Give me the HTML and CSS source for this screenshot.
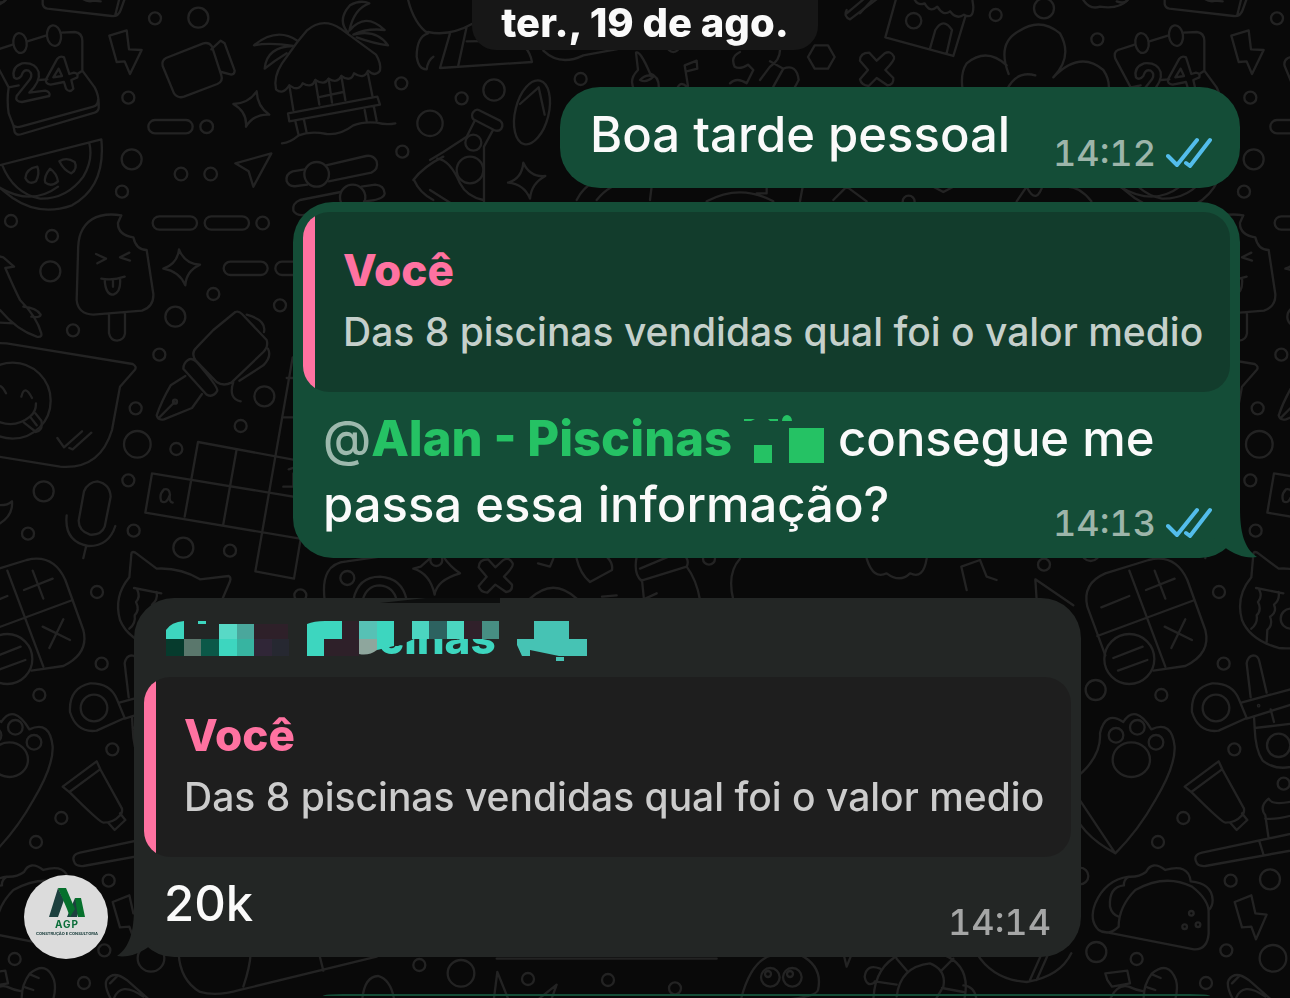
FILE: index.html
```html
<!DOCTYPE html>
<html lang="pt-BR">
<head>
    <meta charset="UTF-8">
    <title>Conversa</title>
    <link rel="stylesheet" href="styles.css">
</head>
<body>
    <svg class="wallpaper" aria-hidden="true">
        <defs>
            <g id="tile">
                <!-- dots -->
                <g id="dots">
                    <circle cx="465" cy="55" r="18"/><circle cx="595" cy="53" r="30"/><circle cx="385" cy="293" r="18"/>
                    <circle cx="620" cy="380" r="19"/><circle cx="395" cy="478" r="30"/><circle cx="543" cy="522" r="19"/>
                    <circle cx="632" cy="522" r="19"/><circle cx="366" cy="575" r="18"/><circle cx="33" cy="663" r="18"/>
                    <circle cx="156" cy="708" r="18"/><circle cx="151" cy="814" r="30"/><circle cx="788" cy="669" r="19"/>
                    <circle cx="640" cy="882" r="18"/><circle cx="840" cy="916" r="18"/><circle cx="526" cy="950" r="30"/>
                    <circle cx="1204" cy="250" r="18"/><circle cx="1207" cy="455" r="18"/><circle cx="219" cy="991" r="18"/>
                    <circle cx="478" cy="1064" r="18"/><circle cx="793" cy="1189" r="30"/><circle cx="407" cy="1225" r="18"/>
                    <circle cx="722" cy="1278" r="18"/><circle cx="412" cy="1333" r="40"/><circle cx="529" cy="1347" r="18"/>
                    <circle cx="385" cy="1441" r="18"/><circle cx="131" cy="1474" r="30"/><circle cx="84" cy="1601" r="18"/>
                    <circle cx="401" cy="1592" r="18"/><circle cx="550" cy="1643" r="30"/><circle cx="690" cy="1652" r="18"/>
                    <circle cx="291" cy="1776" r="18"/><circle cx="901" cy="1786" r="18"/><circle cx="1742" cy="237" r="18"/>
                    <circle cx="1482" cy="270" r="32"/><circle cx="1385" cy="295" r="18"/><circle cx="1290" cy="370" r="38"/>
                    <circle cx="1420" cy="428" r="24"/><circle cx="1410" cy="510" r="40"/><circle cx="2987" cy="45" r="18"/>
                    <circle cx="3132" cy="25" r="30"/><circle cx="3292" cy="118" r="18"/><circle cx="2020" cy="138" r="18"/>
                    <circle cx="305" cy="1991" r="18"/><circle cx="118" cy="2085" r="18"/><circle cx="337" cy="2248" r="18"/>
                    <circle cx="184" cy="2454" r="18"/><circle cx="108" cy="2526" r="18"/><circle cx="326" cy="2642" r="18"/>
                    <circle cx="313" cy="2851" r="18"/><circle cx="44" cy="2877" r="18"/><circle cx="252" cy="2949" r="18"/>
                    <circle cx="453" cy="2875" r="40"/><circle cx="3132" cy="1694" r="18"/><circle cx="3287" cy="2070" r="30"/>
                    <circle cx="3240" cy="2628" r="25"/><circle cx="444" cy="2638" r="30"/><circle cx="3289" cy="2856" r="30"/>
                    <circle cx="485" cy="2351" r="18"/><circle cx="1258" cy="2895" r="18"/><circle cx="1383" cy="2920" r="40"/>
                    <circle cx="1584" cy="2937" r="18"/><circle cx="1824" cy="2940" r="18"/><circle cx="2025" cy="2965" r="18"/>
                    <circle cx="2726" cy="605" r="18"/><circle cx="1309" cy="1680" r="18"/><circle cx="3272" cy="1655" r="28"/>
                </g>
                <!-- dashes -->
                <rect x="445" y="360" width="133" height="40" rx="20"/>
                <rect x="458" y="649" width="133" height="40" rx="20"/>
                <rect x="614" y="649" width="133" height="40" rx="20"/>
                <rect x="671" y="785" width="132" height="40" rx="20"/>
                <rect x="826" y="785" width="132" height="40" rx="20"/>
                <!-- notebook -->
                <path d="M128 -20V12Q130 24 142 26L335 48Q355 50 362 30L380 -20M346 44L362 -20M245 -6Q262 8 280 2L302 4"/>
                <path d="M-16 4Q10 14 20 -4"/>
                <!-- calendar -->
                <path d="M-12 150L38 134M82 124L140 106M184 98L225 96Q246 98 247 122V212M247 212L284 262Q298 288 296 320Q298 332 284 338L66 402Q50 408 44 396L40 376L26 340Q20 300 26 262L-20 176Q-26 156 -12 150M26 262L56 256M116 240L142 238M232 222L247 212M40 376Q48 384 62 380L280 320Q294 316 294 300"/>
                <ellipse cx="60" cy="129" rx="20" ry="30" transform="rotate(-8 60 129)"/>
                <ellipse cx="162" cy="107" rx="21" ry="31" transform="rotate(-8 162 107)"/>
                <path d="M42 232Q34 202 66 190Q106 186 116 216Q122 244 88 278L136 272Q152 276 148 288L66 306Q44 304 50 288L90 238Q100 222 86 212Q70 206 64 228Q52 242 42 232ZM172 176Q180 166 192 172L208 222L222 218Q236 220 232 232L214 240L220 266Q208 280 198 266L192 246L152 254Q134 250 138 238ZM176 206L160 232L186 228Z"/>
                <!-- bolt -->
                <path d="M328 107L380 91L387 148L425 150L390 222L374 184L350 186Z"/>
                <!-- camera -->
                <path d="M498 174L610 130Q628 126 636 140L664 226Q670 244 652 252L552 290Q534 296 522 280L488 198Q484 182 498 174ZM634 148L662 122L674 130L704 212Q704 222 694 224L664 216"/>
                <!-- stars -->
                <path d="M770 274Q772 320 808 344Q760 342 738 380Q742 336 700 312Q746 310 770 274Z"/>
                <path d="M537 748Q554 792 600 794Q558 814 556 856Q538 814 490 806Q532 792 537 748Z"/>
                <path d="M1570 488Q1590 532 1636 528Q1594 550 1590 596Q1572 552 1524 548Q1566 536 1570 488Z"/>
                <!-- arrow -->
                <path d="M706 490L814 460L760 560L746 514Z"/>
                <!-- beach hut -->
                <path d="M892 126L920 92Q968 50 1022 86L1128 164Q1144 190 1140 212Q1126 232 1104 212Q1092 240 1062 220Q1052 248 1024 228Q1012 252 986 236Q974 258 946 240Q936 266 908 250Q896 276 868 256Q848 286 828 268Q820 230 846 190Z"/>
                <path d="M892 122Q830 80 762 136Q810 126 880 138Q800 140 794 206Q824 182 860 160M1044 98Q1010 60 1050 16Q1080 -2 1108 10Q1062 26 1048 92Q1096 34 1154 90Q1100 84 1060 104Q1130 86 1164 136Q1120 130 1070 112"/>
                <path d="M868 256L880 330M946 240L958 314M986 236L996 308M1024 228L1036 300M1104 222L1118 292M954 292L1030 276M864 340L1132 290L1140 314L868 364ZM886 364L896 406M912 360L920 398M1094 330L1100 362M1122 322L1130 362M846 430Q870 428 896 406Q930 392 980 402Q1020 406 1060 376Q1090 364 1130 368Q1160 376 1186 370"/>
                <!-- melon -->
                <path d="M-58 510L304 418Q318 560 216 616Q120 650 38 594Q-20 550 -58 510M6 494Q40 580 120 596Q200 598 250 530Q280 480 268 430"/>
                <path d="M112 500Q78 506 76 534Q86 556 108 544Q120 520 112 500ZM150 506Q130 530 136 548Q154 562 174 544Q170 520 150 506ZM178 484Q200 470 224 486Q234 506 214 520Q192 512 178 484Z"/>
                <!-- sliders -->
                <path d="M914 508L878 514Q856 522 860 544Q868 562 890 558L922 554M986 544L1114 518Q1136 508 1130 484Q1120 464 1098 468L978 496M1022 576L900 600Q876 610 880 632Q890 650 920 644M1084 560L1126 554Q1152 556 1154 580Q1152 600 1092 604"/>
                <circle cx="950" cy="523" r="37"/><circle cx="1058" cy="592" r="38"/>
                <!-- popsicle -->
                <path d="M364 646Q270 632 242 700Q234 720 234 760L230 900Q234 942 280 944L426 932Q462 920 460 882L440 750Q408 750 400 712Q352 704 354 668ZM327 944V1000Q332 1022 351 1022Q372 1020 375 1000V940M288 762L318 776L292 790M388 758L360 772L390 782M304 836Q340 842 374 830M314 838Q316 884 340 884Q364 876 360 834M339 842V860"/>
                <!-- banana -->
                <path d="M-40 760L10 772L42 800L16 804Q40 860 60 900Q110 950 124 1000M70 920Q110 924 122 944Q120 954 94 950M0 930Q50 990 110 1010Q130 1014 122 994M0 968L40 970"/>
                <!-- pen -->
                <path d="M640 990L706 936Q716 932 726 942L800 1020Q806 1040 790 1056L694 1148Q670 1160 650 1146L586 1080Q572 1058 590 1042ZM740 944Q800 960 792 996M804 1046Q816 1070 790 1096L718 1142M564 1080Q550 1090 550 1106L620 1184Q640 1194 652 1172Q654 1160 590 1086Q576 1072 564 1080ZM556 1128L512 1156Q484 1204 470 1246Q474 1262 492 1258L576 1224L606 1182M478 1252L524 1206M700 1146Q684 1196 722 1204"/>
                <circle cx="525" cy="1205" r="6"/>
                <!-- speech bubble -->
                <path d="M-40 1028L20 1030L398 1092Q412 1100 404 1110L360 1160L336 1290Q300 1410 180 1400L-40 1364"/>
                <circle cx="38" cy="1202" r="114"/>
                <path d="M-16 1180Q-4 1136 18 1180M64 1190Q74 1150 96 1194M-20 1258Q40 1290 90 1250Q108 1236 108 1210M72 1268L108 1296Q130 1290 124 1262L106 1240M90 1250L110 1276M172 1314L192 1342L246 1294M208 1344L218 1348L274 1298"/>
                <!-- crossword -->
                <path d="M878 1072L766 1714L882 1736L940 1390L594 1326L554 1550M456 1420L940 1500M456 1420L436 1538L900 1616M710 1348L670 1572M860 1134H900M848 1252H900"/>
                <path d="M510 1484Q508 1464 492 1468Q476 1484 484 1504Q500 1514 510 1484Q506 1506 518 1508M866 1408L884 1402M850 1460H880V1420"/>
                <!-- microphone -->
                <path d="M292 1444Q330 1452 332 1490L314 1580Q304 1606 270 1604Q236 1592 236 1562L252 1474Q264 1446 292 1444ZM200 1546Q192 1624 264 1638Q326 1640 346 1578M258 1640L250 1674"/>
                <path d="M-20 1514Q20 1520 36 1504Q40 1550 -10 1576"/>
                <!-- cat -->
                <path d="M600 1738L686 1728Q694 1732 690 1744L666 1800M600 1738Q540 1702 470 1706L406 1658Q394 1652 394 1664L388 1732Q340 1790 360 1860Q384 1920 470 1944Q540 1950 600 1920M402 1764L484 1780M412 1770Q422 1790 408 1806Q420 1830 404 1846Q408 1870 388 1886M470 1776Q474 1800 456 1814Q466 1836 444 1850Q454 1874 436 1890L434 1926"/>
                <circle cx="506" cy="1856" r="30"/>
                <!-- calculator -->
                <path d="M-50 1720L80 1680Q160 1660 196 1740L250 1890Q268 1960 190 1998L94 2012M-50 1720Q-120 1750 -104 1820L-50 1966M22 1712L130 2000M-74 1908L218 1800M72 1770L158 1736M98 1712L130 1796M-62 1822L22 1788M128 1880L210 1920M190 1858L148 1944"/>
                <circle cx="22" cy="1977" r="75"/>
                <path d="M-26 1974L62 1940M-12 2012L76 1980"/>
                <!-- tape and tools -->
                <path d="M374 2154L290 2192Q230 2200 210 2136Q206 2064 270 2050Q330 2048 350 2096ZM358 2108L520 2064M374 2156L520 2110M386 2092L374 1990Q378 1968 394 1966Q408 1966 412 1984L434 2078M396 2150L398 2184L520 2170M446 2128L456 2166M398 2184Q400 2250 422 2282Q470 2320 540 2290"/>
                <circle cx="282" cy="2124" r="40"/><circle cx="470" cy="2236" r="35"/><circle cx="410" cy="2117" r="2"/>
                <!-- paw -->
                <path d="M-20 2560Q-130 2500 -150 2420M-160 2350Q-60 2280 -66 2200Q-50 2130 4 2166Q40 2110 88 2188Q150 2160 158 2240Q160 2300 100 2400Q50 2490 -20 2560Z"/>
                <circle cx="-18" cy="2206" r="22"/><circle cx="46" cy="2182" r="22"/><circle cx="102" cy="2227" r="22"/><ellipse cx="28" cy="2279" rx="56" ry="52"/>
                <!-- paint tube -->
                <path d="M188 2360L290 2284L302 2310L366 2426Q368 2440 358 2448Q340 2468 310 2468Q300 2468 210 2378ZM208 2376L300 2308M326 2470L344 2490L376 2460L360 2440"/>
                <!-- toothbrush -->
                <path d="M560 2490L240 2558Q214 2564 222 2584Q226 2600 250 2598L560 2542M412 2524L424 2562M440 2516L430 2446Q410 2420 440 2396Q450 2420 530 2400M430 2456Q470 2460 530 2440"/>
                <!-- taco -->
                <path d="M-60 2794L216 2848Q256 2850 260 2800V2740Q262 2700 210 2660Q130 2620 40 2670Q-10 2720 -10 2780Q-40 2810 -70 2790Q-100 2760 -80 2710Q-50 2640 20 2630Q50 2632 72 2616Q90 2580 130 2610Q200 2590 206 2644Q270 2650 272 2700Q272 2720 260 2730M6 2656Q-40 2660 -36 2720Q-30 2744 -10 2750M6 2656Q4 2640 20 2630"/>
                <circle cx="188" cy="2780" r="7"/><circle cx="208" cy="2740" r="7"/><circle cx="228" cy="2774" r="7"/>
                <path d="M338 2706L388 2686L400 2740L434 2744L402 2818L388 2780L360 2782Z"/>
                <!-- peanut, bread, shell -->
                <path d="M-44 2940L-50 2920L16 2912L24 2950L-30 2960ZM-40 3010Q-20 2950 20 2960Q40 2970 66 2974M66 3010Q60 2960 90 2920Q140 2880 162 2940Q170 2970 156 3010M92 2924L116 2934M76 2962L100 2970M340 3010Q310 2960 320 2940Q340 2910 380 2940L460 3010M340 3000Q360 2940 430 2990M350 2930L330 2950"/>
                <path d="M536 2860Q540 2940 600 2976Q650 2990 720 2970L1130 2870M730 2960Q750 2900 752 2860M960 2872L970 2912M1086 3010Q1090 2930 1134 2928Q1176 2940 1184 3010M1480 3010L1492 2916L1530 3010M1600 3010L1670 2954L1650 3010M1490 2876H2150"/>
                <!-- ghost -->
                <path d="M2220 3010Q2250 2880 2320 2864H2400Q2470 2900 2454 2970Q2450 2990 2350 3000"/>
                <circle cx="2311" cy="2932" r="28"/><circle cx="2377" cy="2932" r="28"/><circle cx="2304" cy="2922" r="9"/><circle cx="2370" cy="2922" r="9"/>
                <!-- turtle -->
                <path d="M2620 3010Q2620 2900 2700 2864H2830Q2920 2900 2890 3010M2690 2990Q2700 2900 2790 2890Q2840 2910 2830 2960L2800 3010M2624 2944L2690 2954M2690 2876L2724 2916M2860 2876L2822 2914M2826 2964L2890 2976M2640 2906Q2600 2890 2594 2930Q2600 2964 2626 2946M2890 2956Q2930 2960 2930 3010M2530 2860L2540 2900L2556 2860M2930 2860Q2980 2940 3080 2946Q3180 2930 3214 2860M3090 2940L3130 2850M3110 2940L3150 2850"/>
                <!-- boat, hat and lamp behind the date -->
                <path d="M1222 -10Q1240 70 1284 100Q1250 110 1250 170Q1256 210 1280 208Q1284 180 1300 170M1284 96Q1350 110 1420 70M1350 100L1320 204L1596 186Q1586 130 1530 122L1400 124M1400 80L1374 200M1630 152Q1680 200 1750 166L1860 146M1240 540Q1270 500 1330 470M1242 540Q1260 580 1300 600"/>
                <path d="M1436 330L1500 362Q1512 372 1504 386Q1496 396 1482 390L1420 358Q1412 346 1420 336Q1428 326 1436 330ZM1424 362L1400 410L1330 456L1290 480M1478 392L1452 440V610M1290 570L1400 640M1312 476Q1350 480 1380 550Q1400 590 1450 600"/>
                <ellipse cx="1596" cy="337" rx="50" ry="98" transform="rotate(14 1596 337)"/>
                <path d="M1560 312L1616 262L1634 344"/>
                <path d="M1908 158Q1920 150 1950 220M1908 158L1914 210Q1884 240 1904 270M1950 220Q1980 230 1976 270M1920 240Q1940 220 1960 230Q1940 250 1920 240M2064 258L2054 196L2090 182L2092 206L2060 214M2060 260Q2040 240 2030 270M2220 156Q2190 170 2204 200Q2220 210 2244 194L2260 210L2240 250Q2210 230 2190 250M2340 150Q2340 180 2310 200L2280 240M2310 184L2350 206L2320 260M2350 206Q2390 190 2396 240L2380 270"/>
                <path d="M2424 171L2444 136H2484L2504 171L2484 206H2444ZM2540 40L2600 -10M2540 30Q2530 50 2550 58L2640 -10M2110 0Q2130 10 2150 -4"/>
                <!-- shop -->
                <path d="M2690 -10L2656 112L2860 168L2896 50M2740 -10Q2750 20 2774 10Q2790 40 2812 20Q2830 50 2850 34Q2870 60 2892 44Q2920 60 2920 20L2916 -10M2790 146L2806 90Q2830 50 2856 90L2840 160M2580 40L2620 -4"/>
                <circle cx="2741" cy="62" r="23"/>
                <!-- cross marks -->
                <path id="cross" d="M2608 158L2630 182L2654 160Q2672 150 2682 170Q2686 180 2656 210L2680 234Q2682 254 2662 256L2630 234L2606 258Q2584 256 2580 238L2604 210L2580 182Q2580 158 2608 158Z"/>
                <use href="#cross" transform="translate(-1144 1520)"/>
                <!-- cloud -->
                <path d="M3026 222Q2990 130 3056 94Q3120 50 3180 100Q3220 170 3160 232Q3240 150 3310 210Q3330 240 3326 270M3020 196Q2960 140 2900 190Q2880 220 2888 270M3020 270Q3050 210 3106 226M3250 0Q3270 30 3300 20Q3360 30 3388 -6"/>
                <!-- between messages -->
                <path d="M1730 600Q1750 560 1780 550M1790 600Q1830 550 1880 550M1950 600L1956 550M2120 604Q2220 550 2320 604M2270 580H2300V550M2400 604L2410 550M2500 600L2540 560L2600 604M2800 560L2830 576L2860 560M3050 604L3080 560Q3110 620 3130 550M3200 560Q3240 560 3274 604M3360 560Q3460 620 3540 560"/>
                <path d="M974 1800Q960 1690 1040 1684L1140 1670M1060 1800Q1074 1730 1140 1730Q1206 1734 1220 1800M1088 1800Q1100 1756 1140 1756Q1180 1760 1190 1800M1240 1706L1262 1700L1296 1670M1330 1670Q1350 1700 1380 1720Q1310 1740 1304 1784Q1290 1720 1240 1706M1614 1690L1650 1700L1660 1676M1730 1676Q1740 1720 1770 1746L1836 1710Q1840 1690 1820 1670M1590 1796Q1660 1730 1730 1796M1806 1790L1850 1786M1910 1670Q1900 1720 1924 1742L2060 1700Q2070 1680 2050 1664M1920 1706L2020 1664M1926 1740L1932 1800M2060 1700Q2090 1740 2100 1800M1936 1796L1970 1780"/>
                <circle cx="1042" cy="1734" r="21"/><circle cx="2127" cy="1676" r="18"/>
                <path d="M2200 1800Q2180 1720 2220 1676M2600 1676Q2620 1740 2660 1720Q2700 1750 2730 1720Q2770 1740 2780 1676M2900 1770L2884 1700L2940 1680L2960 1730L2990 1740M3110 1800L3106 1738L3220 1816"/>
            </g>
        </defs>
        <g class="doodles" transform="scale(.33333)">
            <use href="#tile"/>
            <use href="#tile" x="3366"/>
            <use href="#tile" x="-3366"/>
        </g>
    </svg>

    <main class="chat">
        <div class="date">ter., 19 de ago.</div>

        <div class="message sent short">
            <p class="text">Boa tarde pessoal</p>
            <div class="meta">
                <time>14:12</time>
                <svg class="ticks" width="46" height="32" viewBox="0 0 46 32" role="img" aria-label="Lida"><path d="M2 19L11 28L31 3M20 26L24 29L44 3"/></svg>
            </div>
        </div>

        <div class="message sent">
            <blockquote class="quote">
                <strong>Você</strong>
                <p>Das 8 piscinas vendidas qual foi o valor medio</p>
            </blockquote>
            <p class="text"><span class="at">@</span><a class="mention" href="#">Alan - Piscinas <svg class="redacted" width="82" height="52" viewBox="0 0 82 52" aria-hidden="true"><path d="M1 7H12L8 9H1ZM25 7H35V9H27ZM39 9A5 6 0 0 1 49 9ZM11 33H29V51H11ZM46 16H81V51H46Z"/></svg></a> consegue me passa essa informação?</p>
            <div class="meta">
                <time>14:13</time>
                <svg class="ticks" width="46" height="32" viewBox="0 0 46 32" role="img" aria-label="Lida"><path d="M2 19L11 28L31 3M20 26L24 29L44 3"/></svg>
            </div>
            <svg class="tail" width="44" height="50" viewBox="0 0 44 50" aria-hidden="true"><path d="M0 0H26C26 24 30 40 43 49C32 51 20 46 13 41L0 30Z"/></svg>
        </div>

        <div class="row">
            <svg class="avatar" width="84" height="84" viewBox="0 0 84 84" role="img" aria-label="AGP Construção e Consultoria">
                <circle cx="42" cy="42" r="42" fill="#dcdcdc"/>
                <path fill="#1d403f" d="M34 13L25 42H34L40 25ZM51 23L43 42H53L56 32Z"/>
                <path fill="#06702c" d="M34 13H42L51 34L46 42L43 34ZM51 23H57L61 42H54Z"/>
                <text x="43" y="53" class="logo-name">AGP</text>
                <text x="43" y="60" class="logo-line">CONSTRUÇÃO E CONSULTORIA</text>
            </svg>
            <div class="message received">
                <svg class="sender" width="440" height="48" viewBox="0 0 440 48" aria-hidden="true">
                    <path fill="#0d0e0e" d="M216 -5L262 -10H336V-5Z"/>
                    <text x="214" y="46" class="sender-name">cinas</text>
                    <path fill="#232625" d="M200 0H350V31H250L234 38H200Z"/>
                    <g fill="#3dd6bf">
                        <path d="M2 31V22Q7 14 20 13V31ZM34 13H42V16H34ZM143 48V16Q150 13 161 13H178V31H160V48Z"/>
                        <path fill="#063b2d" d="M2 31H20V48H2Z"/>
                        <path fill="#5a776c" d="M20 31H37V48H20Z"/>
                        <path fill="#0b5848" d="M37 31H55V48H37Z"/>
                        <path fill="#58d9c6" d="M55 16H73V31H55Z"/>
                        <path d="M55 31H73V48H55Z"/>
                        <path fill="#4aa79c" d="M73 16H90V31H73Z"/>
                        <path fill="#37b4a1" d="M73 31H90V48H73Z"/>
                        <path fill="#2e2029" d="M90 16H124V31H90ZM178 13H195V31H178ZM160 31H195V48H160Z"/>
                        <path fill="#302637" d="M90 31H108V48H90Z"/>
                        <path fill="#262831" d="M108 31H125V48H108Z"/>
                        <path fill="#57c1b5" d="M195 13H213V31H195Z"/>
                        <path d="M213 13H230V38L213 42Z"/>
                        <path fill="#8ea69d" d="M195 31H213V42Q205 48 195 46Z"/>
                        <path fill="#4bd5c0" d="M248 13H265V31H248ZM283 13H300V31H283Z"/>
                        <path fill="#2d6260" d="M265 13H283V31H265Z"/>
                        <path fill="#30202a" d="M300 13H318V31H300Z"/>
                        <path fill="#478e83" d="M318 13H335V31H318Z"/>
                        <path fill="#46c3b4" d="M370 13H405V31H423V48H395L366 42V48H358L353 37V31H370ZM392 49H400V53H392Z"/>
                    </g>
                </svg>
                <blockquote class="quote">
                    <strong>Você</strong>
                    <p>Das 8 piscinas vendidas qual foi o valor medio</p>
                </blockquote>
                <p class="text">20k</p>
                <div class="meta"><time>14:14</time></div>
                <svg class="tail" width="44" height="50" viewBox="0 0 44 50" aria-hidden="true"><path d="M44 0H18C18 24 14 40 1 49C12 51 24 46 31 41L44 30Z"/></svg>
            </div>
        </div>

        <div class="next"></div>
    </main>
</body>
</html>
```
FILE: styles.css
```css
* {
    box-sizing: border-box;
}
body {
    margin: 0;
    background-color: #090909;
    color: #fafafa;
    font-family: Inter, "Liberation Sans", sans-serif;
}
p, blockquote {
    margin: 0;
}
.wallpaper {
    position: fixed;
    inset: 0;
    width: 100%;
    height: 100%;
}
.doodles {
    fill: none;
    stroke: #232323;
    stroke-width: 7;
    stroke-linecap: round;
    stroke-linejoin: round;
}
.chat {
    position: relative;
    display: flex;
    flex-direction: column;
    padding: 0 50px 0 24px;
}
.date {
    align-self: center;
    margin-left: 26px;
    padding: 0 29px 5px;
    border-radius: 0 0 24px 24px;
    background-color: #171717;
    font-size: 40px;
    font-weight: 800;
    line-height: 45px;
}
.message {
    position: relative;
    width: 947px;
    max-width: 100%;
    padding: 10px;
    border-radius: 40px;
}
.sent {
    align-self: flex-end;
    margin-top: 14px;
    background-color: #144d37;
}
.received {
    background-color: #232625;
}
.short {
    width: 680px;
    margin-top: 37px;
}
.quote {
    height: 180px;
    padding: 32px 0 0 40px;
    border-radius: 26px;
    background: linear-gradient(to right, #ff72a1 12px, #123c2c 12px);
    white-space: nowrap;
}
.received .quote {
    background: linear-gradient(to right, #ff72a1 12px, #1e1e1e 12px);
}
.quote strong {
    display: block;
    color: #ff72a1;
    font-size: 44px;
    font-weight: 800;
    line-height: 52px;
}
.quote p {
    margin-top: 10px;
    color: #c5d0cb;
    font-size: 39px;
    font-weight: 550;
    line-height: 52px;
}
.received .quote p {
    color: #cccccc;
}
.text {
    padding: 14px 20px 10px;
    font-size: 49px;
    font-weight: 550;
    line-height: 66px;
}
.short .text {
    padding: 5px 20px 10px;
}
.at {
    color: #9db9ad;
}
.mention {
    color: #25c264;
    font-weight: 800;
    text-decoration: none;
}
.redacted {
    fill: #25c264;
    vertical-align: -8px;
}
.meta {
    position: absolute;
    right: 28px;
    bottom: 14px;
    display: flex;
    align-items: center;
    gap: 10px;
    color: #9db5aa;
    font-size: 36px;
    font-weight: 550;
    font-variant-numeric: tabular-nums;
    line-height: 42px;
}
.received .meta {
    right: 30px;
    color: #a5a6a6;
}
.ticks {
    fill: none;
    stroke: #53bdeb;
    stroke-width: 4;
    stroke-linecap: round;
    stroke-linejoin: round;
}
.tail {
    position: absolute;
    right: -18px;
    bottom: 0;
    fill: #144d37;
}
.received .tail {
    right: auto;
    left: -18px;
    fill: #232625;
}
.row {
    display: flex;
    align-items: flex-end;
    gap: 26px;
    margin-top: 40px;
}
.avatar {
    flex: none;
    margin-bottom: -2px;
}
.logo-name {
    fill: #0b6e3a;
    font-size: 10px;
    font-weight: 700;
    letter-spacing: 1px;
    text-anchor: middle;
}
.logo-line {
    fill: #1d403f;
    font-size: 4px;
    font-weight: 700;
    text-anchor: middle;
}
.sender {
    display: block;
    margin: 0 0 21px 20px;
    overflow: visible;
}
.sender-name {
    fill: #3dd6bf;
    font-size: 44px;
    font-weight: 800;
}
.next {
    align-self: flex-end;
    width: 887px;
    height: 2px;
    margin: 37px 30px 0 0;
    border-radius: 20px 20px 0 0 / 2px 2px 0 0;
    background-color: #144d37;
}
```
